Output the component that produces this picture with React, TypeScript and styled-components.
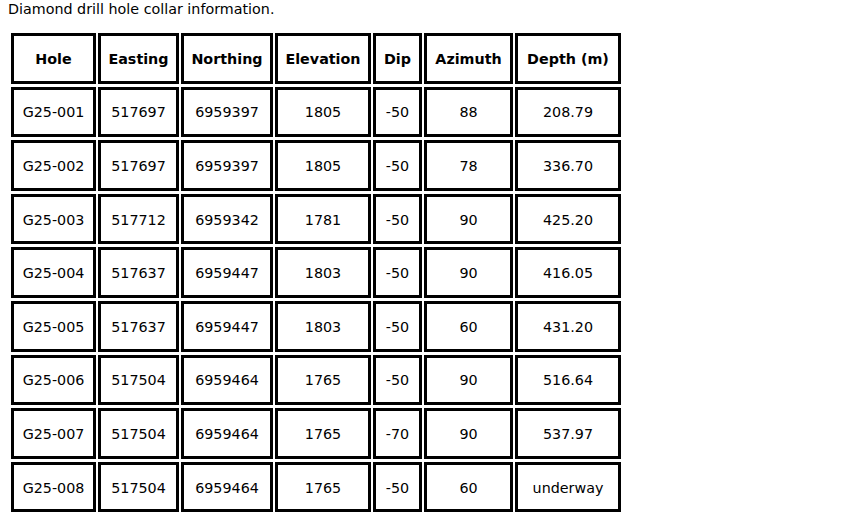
import React from "react";
import styled, { createGlobalStyle } from "styled-components";

interface IHole {
  hole: string;
  easting: number;
  northing: number;
  elevation: number;
  dip: number;
  azimuth: number;
  depth: string;
}

const columns = [
  { label: "Hole", width: 85 },
  { label: "Easting", width: 81 },
  { label: "Northing", width: 92 },
  { label: "Elevation", width: 96 },
  { label: "Dip", width: 49 },
  { label: "Azimuth", width: 89 },
  { label: "Depth (m)", width: 106 },
];

const holes: IHole[] = [
  { hole: "G25-001", easting: 517697, northing: 6959397, elevation: 1805, dip: -50, azimuth: 88, depth: "208.79" },
  { hole: "G25-002", easting: 517697, northing: 6959397, elevation: 1805, dip: -50, azimuth: 78, depth: "336.70" },
  { hole: "G25-003", easting: 517712, northing: 6959342, elevation: 1781, dip: -50, azimuth: 90, depth: "425.20" },
  { hole: "G25-004", easting: 517637, northing: 6959447, elevation: 1803, dip: -50, azimuth: 90, depth: "416.05" },
  { hole: "G25-005", easting: 517637, northing: 6959447, elevation: 1803, dip: -50, azimuth: 60, depth: "431.20" },
  { hole: "G25-006", easting: 517504, northing: 6959464, elevation: 1765, dip: -50, azimuth: 90, depth: "516.64" },
  { hole: "G25-007", easting: 517504, northing: 6959464, elevation: 1765, dip: -70, azimuth: 90, depth: "537.97" },
  { hole: "G25-008", easting: 517504, northing: 6959464, elevation: 1765, dip: -50, azimuth: 60, depth: "underway" },
];

function App() {
  return (
    <>
      <GlobalStyle />
      <Page>
        <Caption>Diamond drill hole collar information.</Caption>
        <Table>
          <thead>
            <tr>
              {columns.map((col) => (
                <HeadCell key={col.label} $width={col.width}>
                  {col.label}
                </HeadCell>
              ))}
            </tr>
          </thead>
          <tbody>
            {holes.map((h) => (
              <tr key={h.hole}>
                <Cell>{h.hole}</Cell>
                <Cell>{h.easting}</Cell>
                <Cell>{h.northing}</Cell>
                <Cell>{h.elevation}</Cell>
                <Cell>{h.dip}</Cell>
                <Cell>{h.azimuth}</Cell>
                <Cell>{h.depth}</Cell>
              </tr>
            ))}
          </tbody>
        </Table>
      </Page>
    </>
  );
}

export default App;

const GlobalStyle = createGlobalStyle`
  body {
    margin: 0;
    background: #fff;
    color: #000;
    font-family: "DejaVu Sans", Verdana, sans-serif;
    font-size: 14.3px;
  }
`;

const Page = styled.div`
  padding: 0 8px;
`;

const Caption = styled.p`
  margin: 0;
  padding-top: 1px;
  line-height: 17px;
`;

const Table = styled.table`
  margin: 12px 0 0 1px;
  border-collapse: separate;
  border-spacing: 2px 3px;
  table-layout: fixed;
`;

const Cell = styled.td`
  box-sizing: border-box;
  height: 50.6px;
  padding: 2px 4px 0;
  border: 3px solid #000;
  text-align: center;
  vertical-align: middle;
  line-height: 17px;
  white-space: nowrap;
`;

const HeadCell = styled.th<{ $width: number }>`
  box-sizing: border-box;
  width: ${(p) => p.$width}px;
  height: 50.6px;
  padding: 2px 4px 0;
  border: 3px solid #000;
  text-align: center;
  vertical-align: middle;
  line-height: 17px;
  font-weight: 700;
  white-space: nowrap;
`;
